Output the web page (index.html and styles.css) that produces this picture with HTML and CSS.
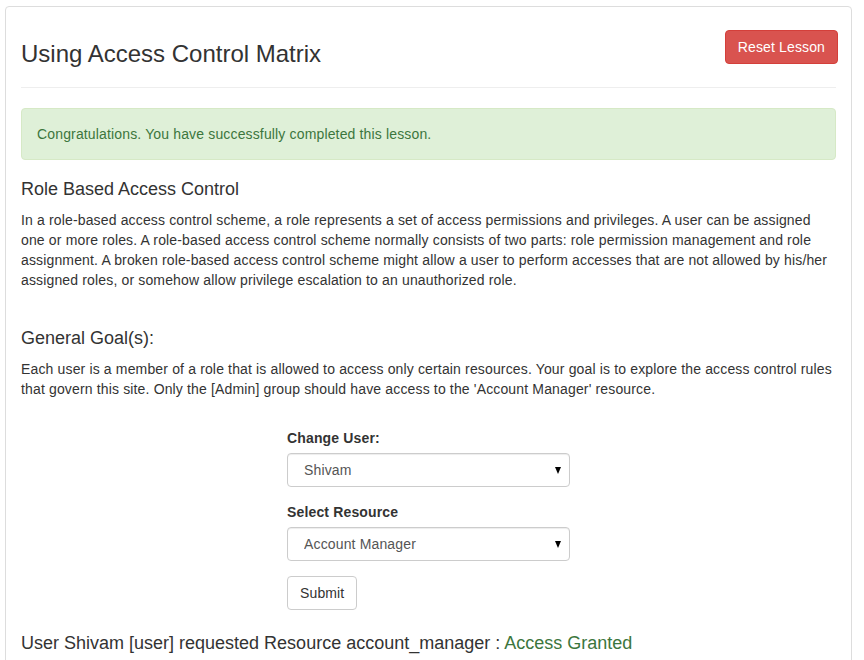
FILE: index.html
```html
<!DOCTYPE html>
<html>
<head>
<meta charset="utf-8">
<link rel="stylesheet" href="styles.css">
</head>
<body>
<div class="page">
  <div class="panel">
    <div class="lesson-header">
      <h1 class="lesson-title">Using Access Control Matrix</h1>
      <button class="btn btn-danger">Reset Lesson</button>
    </div>
    <hr class="rule">
    <div class="alert">Congratulations. You have successfully completed this lesson.</div>
    <h4 class="section-title">Role Based Access Control</h4>
    <p class="text">In a role-based access control scheme, a role represents a set of access permissions and privileges. A user can be assigned one or more roles. A role-based access control scheme normally consists of two parts: role permission management and role assignment. A broken role-based access control scheme might allow a user to perform accesses that are not allowed by his/her assigned roles, or somehow allow privilege escalation to an unauthorized role.</p>
    <h4 class="section-title goal">General Goal(s):</h4>
    <p class="text">Each user is a member of a role that is allowed to access only certain resources. Your goal is to explore the access control rules that govern this site. Only the [Admin] group should have access to the 'Account Manager' resource.</p>
    <form class="lesson-form">
      <div class="form-group">
        <label class="label">Change User:</label>
        <div class="select-wrap">
          <select class="form-control"><option>Shivam</option></select>
          <span class="caret"></span>
        </div>
      </div>
      <div class="form-group">
        <label class="label">Select Resource</label>
        <div class="select-wrap">
          <select class="form-control"><option>Account Manager</option></select>
          <span class="caret"></span>
        </div>
      </div>
      <button type="button" class="btn btn-default">Submit</button>
    </form>
    <div class="result">User Shivam [user] requested Resource account_manager : <span class="granted">Access Granted</span></div>
  </div>
</div>
</body>
</html>
```

FILE: styles.css
```css
html, body {
  margin: 0;
  padding: 0;
  background: #fff;
}
body {
  font-family: "Liberation Sans", Arial, sans-serif;
  font-size: 14px;
  line-height: 20px;
  letter-spacing: 0.15px;
  color: #333;
}
.page {
  padding: 6px 12px 0 5px;
}
.panel {
  border: 1px solid #ddd;
  border-radius: 4px;
  padding: 0 15px 30px 15px;
}
.lesson-header {
  display: flex;
  justify-content: space-between;
  align-items: flex-start;
}
.lesson-title {
  margin: 34px 0 0 0;
  font-size: 24px;
  font-weight: 500;
  line-height: 26.4px;
  letter-spacing: 0;
  color: #333;
}
.btn {
  font-family: "Liberation Sans", Arial, sans-serif;
  font-size: 14px;
  line-height: 20px;
  letter-spacing: 0.13px;
  padding: 6px 12px;
  border-radius: 4px;
  border: 1px solid transparent;
  cursor: pointer;
}
.btn-danger {
  margin-top: 23px;
  margin-right: -2px;
  background: #d9534f;
  border-color: #d43f3a;
  color: #fff;
}
.btn-default {
  background: #fff;
  border-color: #ccc;
  color: #333;
}
.rule {
  margin: 20px 0 20px 0;
  border: 0;
  border-top: 1px solid #eee;
  height: 0;
}
.alert {
  background: #dff0d8;
  border: 1px solid #d6e9c6;
  color: #3c763d;
  border-radius: 4px;
  padding: 15px;
  margin-bottom: 20px;
}
.section-title {
  font-size: 18px;
  font-weight: 500;
  line-height: 19.8px;
  letter-spacing: 0;
  margin: 0 0 10px 0;
}
.section-title.goal {
  margin-top: 39px;
}
.text {
  margin: 0;
}
.lesson-form {
  width: 283px;
  margin: 29px auto 0 auto;
}
.form-group {
  margin-bottom: 15px;
}
.label {
  display: block;
  font-weight: bold;
  margin-bottom: 5px;
}
.select-wrap {
  position: relative;
}
.form-control {
  display: block;
  width: 100%;
  height: 34px;
  box-sizing: border-box;
  padding: 6px 12px 6px 16px;
  font-family: "Liberation Sans", Arial, sans-serif;
  font-size: 14px;
  letter-spacing: 0.15px;
  color: #555;
  background: #fff;
  border: 1px solid #ccc;
  border-radius: 4px;
  box-shadow: inset 0 1px 1px rgba(0,0,0,0.075);
  -webkit-appearance: none;
  appearance: none;
}
.caret {
  position: absolute;
  right: 9px;
  top: 14px;
  width: 0;
  height: 0;
  border-left: 3.5px solid transparent;
  border-right: 3.5px solid transparent;
  border-top: 7px solid #000;
}
.result {
  margin-top: 24px;
  font-size: 18px;
  line-height: 19.8px;
  letter-spacing: 0;
}
.granted {
  color: #3c763d;
}
```
